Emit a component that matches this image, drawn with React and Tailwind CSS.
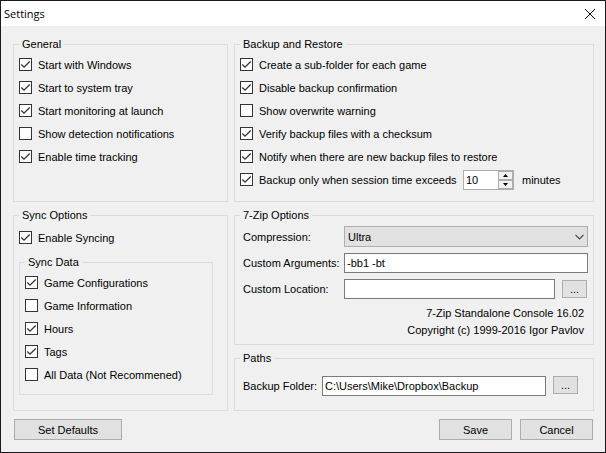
import React, { useState } from "react";

function Group({ title, className = "", children }) {
  return (
    <fieldset className={`min-w-0 border border-[#dcdcdc] px-[5px] ${className}`}>
      <legend className="h-3.5 px-[3px] leading-3.5">{title}</legend>
      {children}
    </fieldset>
  );
}

function Check({ label, checked = false }) {
  return (
    <label className="flex h-[23px] items-center gap-1.5 whitespace-nowrap">
      <span className="grid size-[13px] shrink-0">
        <input
          type="checkbox"
          defaultChecked={checked}
          className="peer col-start-1 row-start-1 size-[13px] appearance-none border border-[#333] bg-white"
        />
        <svg
          viewBox="0 0 13 13"
          className="pointer-events-none invisible col-start-1 row-start-1 size-[13px] peer-checked:visible"
          fill="none"
          stroke="#333"
          strokeWidth="1.3"
        >
          <path d="M2.3 6.5 5 9.2 10.7 3.5" />
        </svg>
      </span>
      {label}
    </label>
  );
}

function Button({ className = "", children, ...rest }) {
  return (
    <button type="button" className={`border border-[#adadad] bg-[#e1e1e1] text-center ${className}`} {...rest}>
      {children}
    </button>
  );
}

const field = "h-5 min-w-0 flex-1 border border-[#7a7a7a] bg-white px-0.5";

export default function App() {
  const [minutes, setMinutes] = useState(10);

  return (
    <main className="border border-[#1b191b] bg-[#f0f0f0] font-['Liberation_Sans',Arial,sans-serif] text-[11px] leading-3.5 text-black">
      <header className="flex h-[25px] items-center justify-between bg-white pr-2.5 pl-[3px]">
        <h1 className="font-['Open_Sans','Noto_Sans',sans-serif] text-[11px]">Settings</h1>
        <button type="button" aria-label="Close">
          <svg viewBox="0 0 10 10" className="size-2.5" stroke="#000" strokeWidth="1">
            <path d="M0 0 10 10M10 0 0 10" />
          </svg>
        </button>
      </header>

      <form className="pt-[11px] pr-[11px] pb-3 pl-3">
        <div className="grid grid-cols-[215px_1fr] gap-1.5">
          <Group title="General">
            <div className="pt-0.5">
              <Check label="Start with Windows" checked />
              <Check label="Start to system tray" checked />
              <Check label="Start monitoring at launch" checked />
              <Check label="Show detection notifications" />
              <Check label="Enable time tracking" checked />
            </div>
          </Group>

          <Group title="Backup and Restore">
            <div className="pt-0.5 pb-2.5">
              <Check label="Create a sub-folder for each game" checked />
              <Check label="Disable backup confirmation" checked />
              <Check label="Show overwrite warning" />
              <Check label="Verify backup files with a checksum" checked />
              <Check label="Notify when there are new backup files to restore" checked />
              <div className="flex h-[23px] items-center">
                <div className="w-[223px]">
                  <Check label="Backup only when session time exceeds" checked />
                </div>
                <div className="flex h-5 w-[51px] border border-[#abadb3] bg-white">
                  <input
                    id="minutes"
                    type="text"
                    value={minutes}
                    onChange={(e) => setMinutes(Number(e.target.value) || 0)}
                    className="min-w-0 flex-1 px-0.5"
                  />
                  <span className="grid w-[15px] grid-rows-2">
                    <button
                      type="button"
                      aria-label="Increase"
                      onClick={() => setMinutes(minutes + 1)}
                      className="flex items-center justify-center border border-[#adadad] bg-[#f0f0f0]"
                    >
                      <svg viewBox="0 0 5 3" className="h-[3px] w-[5px]">
                        <path d="M0 3 2.5 0 5 3Z" />
                      </svg>
                    </button>
                    <button
                      type="button"
                      aria-label="Decrease"
                      onClick={() => setMinutes(Math.max(0, minutes - 1))}
                      className="flex items-center justify-center border border-[#adadad] bg-[#f0f0f0]"
                    >
                      <svg viewBox="0 0 5 3" className="h-[3px] w-[5px]">
                        <path d="M0 0 2.5 3 5 0Z" />
                      </svg>
                    </button>
                  </span>
                </div>
                <label htmlFor="minutes" className="pl-2">minutes</label>
              </div>
            </div>
          </Group>

          <Group title="Sync Options">
            <div className="pt-1 pb-[15px]">
              <Check label="Enable Syncing" checked />
              <Group title="Sync Data" className="mt-1.5 mr-[9px]">
                <div className="pt-0.5 pb-2">
                  <Check label="Game Configurations" checked />
                  <Check label="Game Information" />
                  <Check label="Hours" checked />
                  <Check label="Tags" checked />
                  <Check label="All Data (Not Recommened)" />
                </div>
              </Group>
            </div>
          </Group>

          <div className="flex flex-col gap-1.5">
            <Group title="7-Zip Options">
              <div className="flex flex-col gap-1.5 pt-1 pb-[5px] pl-[3px]">
                <div className="flex items-center">
                  <label htmlFor="compression" className="w-[101px] whitespace-nowrap">Compression:</label>
                  <span className="grid flex-1 items-center">
                    <select
                      id="compression"
                      defaultValue="Ultra"
                      className="col-start-1 row-start-1 h-[21px] w-full appearance-none border border-[#adadad] bg-[#e1e1e1] px-[3px]"
                    >
                      <option>Normal</option>
                      <option>Maximum</option>
                      <option>Ultra</option>
                    </select>
                    <svg
                      viewBox="0 0 9 6"
                      className="pointer-events-none col-start-1 row-start-1 mr-1 h-1.5 w-[9px] justify-self-end"
                      fill="none"
                      stroke="#444"
                      strokeWidth="1.2"
                    >
                      <path d="M.5.8 4.5 4.8 8.5.8" />
                    </svg>
                  </span>
                </div>
                <div className="flex items-center">
                  <label htmlFor="arguments" className="w-[101px] whitespace-nowrap">Custom Arguments:</label>
                  <input id="arguments" type="text" defaultValue="-bb1 -bt" className={field} />
                </div>
                <div className="flex items-center">
                  <label htmlFor="location" className="w-[101px] whitespace-nowrap">Custom Location:</label>
                  <input id="location" type="text" className={field} />
                  <Button className="mr-px ml-[7px] h-[18px] w-[25px]" aria-label="Browse for 7-Zip">...</Button>
                </div>
                <p className="pr-1 text-right leading-[17px]">
                  7-Zip Standalone Console 16.02
                  <br />
                  Copyright (c) 1999-2016 Igor Pavlov
                </p>
              </div>
            </Group>

            <Group title="Paths">
              <div className="flex pt-[11px] pr-2.5 pb-3.5 pl-[3px]">
                <label htmlFor="folder" className="w-[79px] leading-5 whitespace-nowrap">Backup Folder:</label>
                <input id="folder" type="text" defaultValue="C:\Users\Mike\Dropbox\Backup" className={field} />
                <Button className="ml-[7px] h-[18px] w-[25px]" aria-label="Browse for backup folder">...</Button>
              </div>
            </Group>
          </div>
        </div>

        <div className="mt-2 flex gap-2 pr-px pl-px">
          <Button className="mr-auto h-[21px] w-[108px]">Set Defaults</Button>
          <Button className="h-[21px] w-[73px]">Save</Button>
          <Button className="h-[21px] w-[73px]">Cancel</Button>
        </div>
      </form>
    </main>
  );
}
